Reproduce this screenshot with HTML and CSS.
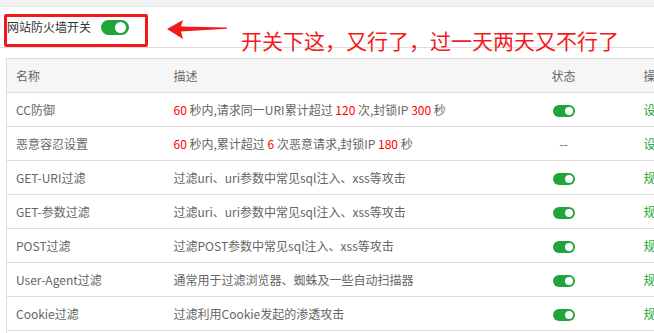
FILE: index.html
```html
<!doctype html>
<html lang="zh-CN">
  <head>
    <meta charset="UTF-8" />
    <meta name="viewport" content="width=device-width, initial-scale=1.0" />
    <title>网站防火墙</title>
    <link rel="stylesheet" href="styles.css">
  </head>
  <body>
    <div class="topbar"></div>
    <div class="panel">
      <div class="panel-head">
        <span class="head-label">网站防火墙开关</span>
        <span class="switch switch-lg"></span>
      </div>

      <!-- 截图上的标注 -->
      <div class="note-box"></div>
      <svg class="note-arrow" width="62" height="22" viewBox="0 0 62 22">
        <polygon points="1,10 17,1 15,7.5 61,8.5 61,9.8 15,12.5 17,20" fill="#f21b1b" />
      </svg>
      <div class="note-text">开关下这，又行了，过一天两天又不行了</div>

      <table class="rules">
        <colgroup>
          <col style="width: 158px" />
          <col style="width: 349px" />
          <col style="width: 100px" />
          <col style="width: 93px" />
        </colgroup>
        <thead>
          <tr>
            <th>名称</th>
            <th>描述</th>
            <th class="c-status">状态</th>
            <th class="c-op">操作</th>
          </tr>
        </thead>
        <tbody>
          <tr>
            <td>CC防御</td>
            <td><em>60</em> 秒内,请求同一URI累计超过 <em>120</em> 次,封锁IP <em>300</em> 秒</td>
            <td class="c-status"><span class="switch"></span></td>
            <td class="c-op"><a>设置</a></td>
          </tr>
          <tr>
            <td>恶意容忍设置</td>
            <td><em>60</em> 秒内,累计超过 <em>6</em> 次恶意请求,封锁IP <em>180</em> 秒</td>
            <td class="c-status">--</td>
            <td class="c-op"><a>设置</a></td>
          </tr>
          <tr>
            <td>GET-URI过滤</td>
            <td>过滤uri、uri参数中常见sql注入、xss等攻击</td>
            <td class="c-status"><span class="switch"></span></td>
            <td class="c-op"><a>规则</a></td>
          </tr>
          <tr>
            <td>GET-参数过滤</td>
            <td>过滤uri、uri参数中常见sql注入、xss等攻击</td>
            <td class="c-status"><span class="switch"></span></td>
            <td class="c-op"><a>规则</a></td>
          </tr>
          <tr>
            <td>POST过滤</td>
            <td>过滤POST参数中常见sql注入、xss等攻击</td>
            <td class="c-status"><span class="switch"></span></td>
            <td class="c-op"><a>规则</a></td>
          </tr>
          <tr>
            <td>User-Agent过滤</td>
            <td>通常用于过滤浏览器、蜘蛛及一些自动扫描器</td>
            <td class="c-status"><span class="switch"></span></td>
            <td class="c-op"><a>规则</a></td>
          </tr>
          <tr>
            <td>Cookie过滤</td>
            <td>过滤利用Cookie发起的渗透攻击</td>
            <td class="c-status"><span class="switch"></span></td>
            <td class="c-op"><a>规则</a></td>
          </tr>
          <tr>
            <td>常见扫描器</td>
            <td>过滤常见扫描测试工具的渗透测试</td>
            <td class="c-status"><span class="switch"></span></td>
            <td class="c-op"><a>规则</a></td>
          </tr>
        </tbody>
      </table>
    </div>
  </body>
</html>
```

FILE: styles.css
```css
html,
body {
  margin: 0;
  overflow: hidden;
  background-color: #fff;
  font-family: "Noto Sans CJK SC", sans-serif;
  font-size: 12px;
  color: #666;
}
.topbar {
  height: 6px;
  background-color: #f3f3f3;
  border-bottom: 1px solid #e6e6e6;
}
.panel {
  position: relative;
  background-color: #fff;
}
.panel-head {
  display: flex;
  align-items: center;
  gap: 10px;
  height: 40px;
  padding-left: 7px;
  border-bottom: 1px solid #ddd;
}
.head-label {
  color: #333;
  line-height: 16px;
}
.switch {
  display: inline-block;
  position: relative;
  width: 22px;
  height: 12px;
  border-radius: 7px;
  background-color: #20a53a;
  vertical-align: middle;
}
.switch::after {
  content: "";
  position: absolute;
  top: 2px;
  right: 2px;
  width: 8px;
  height: 8px;
  border-radius: 50%;
  background-color: #fff;
}
.switch-lg {
  width: 28px;
  height: 15px;
  border-radius: 8px;
}
.switch-lg::after {
  top: 2px;
  right: 3px;
  width: 11px;
  height: 11px;
}
.note-box {
  position: absolute;
  left: 4px;
  top: 7px;
  width: 138px;
  height: 27px;
  border: 3px solid #f0191b;
  border-radius: 2px;
}
.note-arrow {
  position: absolute;
  left: 166px;
  top: 12px;
}
.note-text {
  position: absolute;
  left: 241px;
  top: 19px;
  font-size: 21px;
  line-height: 28px;
  color: #f51a1a;
  white-space: nowrap;
}
.rules {
  margin: 10px 0 0 6px;
  width: 700px;
  table-layout: fixed;
  border-collapse: collapse;
  border-top: 1px solid #ddd;
  border-left: 1px solid #ddd;
}
.rules th,
.rules td {
  height: 33px;
  padding: 0 9px;
  border-bottom: 1px solid #ddd;
  text-align: left;
  font-weight: normal;
  line-height: 16px;
  white-space: nowrap;
}
.rules th {
  background-color: #f6f6f6;
}
.rules em {
  font-style: normal;
  color: #f00;
}
.rules .c-status {
  text-align: center;
}
.rules .c-op {
  padding-left: 30px;
}
.rules a {
  color: #20a53a;
}
```
